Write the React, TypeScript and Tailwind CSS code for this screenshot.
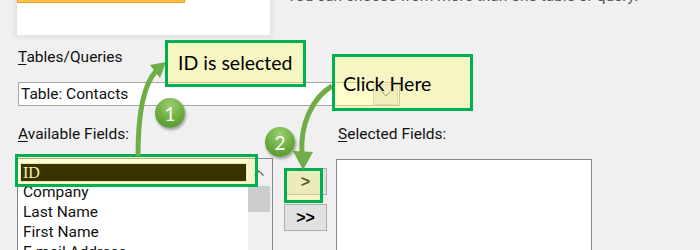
import React from "react";

const GREEN = "#00b050";

function Badge({ n, cls }: { n: string; cls: string }) {
  return (
    <div
      className={`absolute ${cls} w-[30px] h-[30px] rounded-full bg-[radial-gradient(circle_at_50%_25%,#9bcf6e_0%,#6aab3f_55%,#4f8f2a_100%)] shadow-[1px_2px_3px_rgba(0,0,0,0.35)] flex items-center justify-center text-white text-[19px] leading-none font-['Lato',sans-serif]`}
    >
      {n}
    </div>
  );
}

export default function App() {
  return (
    <div className="relative w-[700px] h-[250px] overflow-hidden bg-[#f0f0f0] font-['Roboto',sans-serif] text-[15.5px] text-[#111]">
      {/* top row */}
      <div className="flex h-[35px]">
        <div className="ml-[17px] w-[253px] h-[35px] bg-white shadow-[0_0_5px_3px_rgba(0,0,0,0.06)]">
          <div className="w-[168px] h-[4px] -mt-[1px] bg-[#f9c443] border border-[#ec9a2a]" />
        </div>
        <div className="ml-[17px] -mt-[14px] leading-[20px] text-[#555]">
          You can choose from more than one table or query.
        </div>
      </div>

      {/* Tables/Queries */}
      <div className="mt-[12px] ml-[18px] h-[20px] leading-[20px]">
        <span className="underline underline-offset-2">T</span>ables/Queries
      </div>

      {/* combo */}
      <div className="mt-[15px] ml-[18px] w-[382px] h-[24px] bg-white border border-[#a5a5a5] flex items-center">
        <div className="flex-1 pl-[2px] leading-[20px]">Table: Contacts</div>
        <div className="w-[25px] h-[21px] mr-[1px] bg-[#e5e5e5] border border-[#c9c9c9] flex items-center justify-center">
          <svg width="10" height="6" viewBox="0 0 10 6">
            <path d="M0.5 0.5 L5 5 L9.5 0.5" fill="none" stroke="#606060" strokeWidth="1" />
          </svg>
        </div>
      </div>

      {/* labels */}
      <div className="mt-[18px] ml-[18px] flex h-[20px] leading-[20px]">
        <div className="w-[320px]">
          <span className="underline underline-offset-2">A</span>vailable Fields:
        </div>
        <div>
          <span className="underline underline-offset-2">S</span>elected Fields:
        </div>
      </div>

      {/* lists row */}
      <div className="mt-[14px] ml-[17px] flex items-start">
        <div className="w-[256px] h-[100px] bg-white border border-[#828790] flex">
          <div className="flex-1 pt-[4px] pl-[2px] pr-[1px]">
            <div className="relative z-10 h-[19px] leading-[17px] pl-[2px] bg-[#383300] text-[#f4f0b8] border border-[#ece7a6] font-['Liberation_Serif',serif] text-[16px]">
              ID
            </div>
            <div className="h-[20px] leading-[20px] pl-[3px]">Company</div>
            <div className="h-[20px] leading-[20px] pl-[3px]">Last Name</div>
            <div className="h-[20px] leading-[20px] pl-[3px]">First Name</div>
            <div className="h-[20px] leading-[20px] pl-[3px]">E-mail Address</div>
          </div>
          <div className="w-[24px] bg-[#f0f0f0] flex flex-col items-start">
            <div className="h-[27px] w-[22px] flex items-center justify-center">
              <svg width="10" height="6" viewBox="0 0 10 6">
                <path d="M0.5 5.5 L5 1 L9.5 5.5" fill="none" stroke="#606060" strokeWidth="1.2" />
              </svg>
            </div>
            <div className="w-[22px] h-[26px] bg-[#cdcdcd]" />
          </div>
        </div>

        <div className="ml-[11px] flex flex-col">
          <div className="mt-[10px] w-[43px] h-[27px] bg-[#e1e1e1] border border-[#adadad] flex items-center justify-center font-bold text-[16px] text-black font-['Liberation_Sans',sans-serif]">
            &gt;
          </div>
          <div className="mt-[9px] w-[43px] h-[27px] bg-[#e1e1e1] border border-[#adadad] flex items-center justify-center font-bold text-[16px] text-black font-['Liberation_Sans',sans-serif]">
            &gt;&gt;
          </div>
        </div>

        <div className="ml-[9px] mt-[1px] w-[256px] h-[100px] bg-white border border-[#828790]" />
      </div>

      {/* highlight boxes */}
      <div className="absolute left-[15px] top-[154px] w-[243px] h-[33px] border-[3px] border-[#00b050] bg-[rgba(255,255,120,0.3)]" />
      <div className="absolute left-[284px] top-[168px] w-[39px] h-[35px] border-[3px] border-[#00b050] bg-[rgba(255,255,120,0.35)]" />

      {/* arrows */}
      <svg className="absolute inset-0 pointer-events-none" width="700" height="250" viewBox="0 0 700 250">
        <path d="M138 156 C 138 115 143 85 156 71" fill="none" stroke="#70ad47" strokeWidth="5" />
        <polygon points="166,62 150,65 160,78" fill="#70ad47" />
        <path d="M332 86 C 312 98 300 125 302 153" fill="none" stroke="#70ad47" strokeWidth="5" />
        <polygon points="303,170 293,151 313,152" fill="#70ad47" />
      </svg>

      {/* callouts */}
      <div
        className="absolute left-[165px] top-[40px] w-[141px] h-[47px] border-[3px] bg-[rgba(255,255,128,0.4)] font-['Lato',sans-serif] text-[19.5px] text-black leading-[22px] pl-[10px] pt-[9px]"
        style={{ borderColor: GREEN }}
      >
        ID is selected
      </div>
      <div
        className="absolute left-[332px] top-[54px] w-[141px] h-[57px] border-[3px] bg-[rgba(255,255,128,0.4)] font-['Lato',sans-serif] text-[19.5px] text-black leading-[22px] pl-[8px] pt-[16px]"
        style={{ borderColor: GREEN }}
      >
        Click Here
      </div>

      <Badge n="1" cls="left-[155px] top-[98px]" />
      <Badge n="2" cls="left-[265px] top-[127px]" />
    </div>
  );
}
